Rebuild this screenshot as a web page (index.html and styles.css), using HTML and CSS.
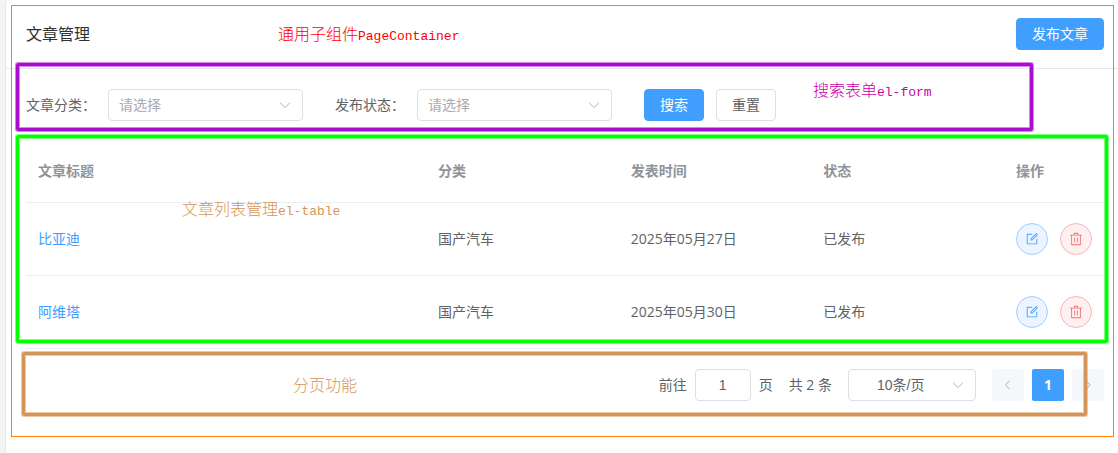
FILE: index.html
```html
<!DOCTYPE html>
<html lang="zh-CN">
<head>
    <meta charset="UTF-8">
    <meta name="viewport" content="width=device-width, initial-scale=1.0">
    <title>文章管理</title>
    <link rel="stylesheet" href="styles.css">
</head>
<body>
    <!-- shared icons -->
    <svg class="sprite" aria-hidden="true">
        <symbol id="arrow-down" viewBox="0 0 1024 1024">
            <path d="M831.872 340.864 512 652.672 192.128 340.864a30.592 30.592 0 0 0-42.752 0 29.12 29.12 0 0 0 0 41.6L489.664 714.24a32 32 0 0 0 44.672 0l340.288-331.712a29.12 29.12 0 0 0 0-41.728 30.592 30.592 0 0 0-42.752 0z"/>
        </symbol>
        <symbol id="arrow-left" viewBox="0 0 1024 1024">
            <path d="M609.408 149.376 277.76 489.6a32 32 0 0 0 0 44.672l331.648 340.352a29.12 29.12 0 0 0 41.728 0 30.592 30.592 0 0 0 0-42.752L339.264 511.936l311.872-319.872a30.592 30.592 0 0 0 0-42.688 29.12 29.12 0 0 0-41.728 0z"/>
        </symbol>
        <symbol id="arrow-right" viewBox="0 0 1024 1024">
            <path d="M340.864 149.312a30.592 30.592 0 0 0 0 42.752L652.736 512 340.864 831.872a30.592 30.592 0 0 0 0 42.752 29.12 29.12 0 0 0 41.728 0L714.24 534.336a32 32 0 0 0 0-44.672L382.592 149.376a29.12 29.12 0 0 0-41.728 0z"/>
        </symbol>
        <symbol id="edit" viewBox="0 0 1024 1024">
            <path d="M832 512a32 32 0 1 1 64 0v352a32 32 0 0 1-32 32H160a32 32 0 0 1-32-32V160a32 32 0 0 1 32-32h352a32 32 0 0 1 0 64H192v640h640z"/>
            <path d="m469.952 554.24 52.8-7.552L847.104 222.4a32 32 0 1 0-45.248-45.248L477.44 501.44l-7.552 52.8zm422.4-422.4a96 96 0 0 1 0 135.808l-331.84 331.84a32 32 0 0 1-18.112 9.088L436.8 623.68a32 32 0 0 1-36.224-36.224l15.104-105.6a32 32 0 0 1 9.024-18.112l331.904-331.84a96 96 0 0 1 135.744 0z"/>
        </symbol>
        <symbol id="delete" viewBox="0 0 1024 1024">
            <path d="M160 256H96a32 32 0 0 1 0-64h256V95.936a32 32 0 0 1 32-32h256a32 32 0 0 1 32 32V192h256a32 32 0 1 1 0 64h-64v672a32 32 0 0 1-32 32H192a32 32 0 0 1-32-32zm448-64v-64H416v64zM224 896h576V256H224zm192-128a32 32 0 0 1-32-32V416a32 32 0 0 1 64 0v320a32 32 0 0 1-32 32m192 0a32 32 0 0 1-32-32V416a32 32 0 0 1 64 0v320a32 32 0 0 1-32 32"/>
        </symbol>
    </svg>

    <main class="card">
        <div class="page-container">
            <header class="card-header">
                <h1>文章管理</h1>
                <button class="btn btn-primary" type="button">发布文章</button>
            </header>

            <div class="card-body">
                <form class="search-form">
                    <div class="form-item">
                        <label for="category">文章分类：</label>
                        <div class="select-box">
                            <select id="category" class="placeholder">
                                <option>请选择</option>
                            </select>
                            <svg class="icon"><use href="#arrow-down"/></svg>
                        </div>
                    </div>
                    <div class="form-item">
                        <label for="state">发布状态：</label>
                        <div class="select-box">
                            <select id="state" class="placeholder">
                                <option>请选择</option>
                            </select>
                            <svg class="icon"><use href="#arrow-down"/></svg>
                        </div>
                    </div>
                    <div class="form-buttons">
                        <button class="btn btn-primary" type="button">搜索</button>
                        <button class="btn" type="reset">重置</button>
                    </div>
                    <div class="mark mark-form"></div>
                    <span class="note note-form">搜索表单<span class="latin">el-form</span></span>
                </form>

                <div class="table-wrap">
                    <table>
                        <colgroup>
                            <col class="col-title">
                            <col>
                            <col>
                            <col>
                            <col class="col-action">
                        </colgroup>
                        <thead>
                            <tr>
                                <th>文章标题</th>
                                <th>分类</th>
                                <th>发表时间</th>
                                <th>状态</th>
                                <th>操作</th>
                            </tr>
                        </thead>
                        <tbody>
                            <tr>
                                <td><a href="#">比亚迪</a></td>
                                <td>国产汽车</td>
                                <td>2025年05月27日</td>
                                <td>已发布</td>
                                <td>
                                    <div class="actions">
                                        <button class="circle edit" type="button" aria-label="编辑"><svg class="icon"><use href="#edit"/></svg></button>
                                        <button class="circle delete" type="button" aria-label="删除"><svg class="icon"><use href="#delete"/></svg></button>
                                    </div>
                                </td>
                            </tr>
                            <tr>
                                <td><a href="#">阿维塔</a></td>
                                <td>国产汽车</td>
                                <td>2025年05月30日</td>
                                <td>已发布</td>
                                <td>
                                    <div class="actions">
                                        <button class="circle edit" type="button" aria-label="编辑"><svg class="icon"><use href="#edit"/></svg></button>
                                        <button class="circle delete" type="button" aria-label="删除"><svg class="icon"><use href="#delete"/></svg></button>
                                    </div>
                                </td>
                            </tr>
                        </tbody>
                    </table>
                    <div class="mark mark-table"></div>
                    <span class="note note-table">文章列表管理<span class="latin">el-table</span></span>
                </div>

                <nav class="pagination">
                    <div class="jumper">
                        <label for="page">前往</label>
                        <input id="page" type="text" value="1">
                        <span>页</span>
                    </div>
                    <span>共 2 条</span>
                    <div class="select-box page-size">
                        <select aria-label="每页条数">
                            <option>10条/页</option>
                        </select>
                        <svg class="icon"><use href="#arrow-down"/></svg>
                    </div>
                    <div class="pager">
                        <button type="button" disabled aria-label="上一页"><svg class="icon"><use href="#arrow-left"/></svg></button>
                        <button class="current" type="button">1</button>
                        <button type="button" disabled aria-label="下一页"><svg class="icon"><use href="#arrow-right"/></svg></button>
                    </div>
                    <div class="mark mark-page"></div>
                    <span class="note note-page">分页功能</span>
                </nav>
            </div>

            <div class="outline"></div>
            <span class="note note-container">通用子组件<span class="latin">PageContainer</span></span>
        </div>
    </main>
</body>
</html>
```

FILE: styles.css
```css
* {
    margin: 0;
    padding: 0;
    box-sizing: border-box;
}

body {
    min-height: 100vh;
    padding-left: 5px;
    background: #f4f4f4;
    color: #606266;
    font-family: "Open Sans", "Noto Sans CJK SC", sans-serif;
    font-size: 14px;
    line-height: 24px;
}

button, input, select {
    font: inherit;
    color: inherit;
}

a {
    color: #409eff;
    text-decoration: none;
}

.sprite {
    display: none;
}

.icon {
    display: block;
    width: 14px;
    height: 14px;
    fill: currentColor;
}

.card {
    min-height: 100vh;
    background: #fff;
    border-left: 1px solid #e4e7ed;
    border-radius: 4px 0 0 0;
}

.page-container {
    position: relative;
}

.card-header {
    display: flex;
    justify-content: space-between;
    align-items: center;
    padding: 18px 14px 18px 20px;
    border-bottom: 1px solid #e4e7ed;
}

.card-header h1 {
    color: #303133;
    font-size: 16px;
    font-weight: 400;
}

.card-body {
    padding: 20px 14px 20px 20px;
}

/* buttons */
.btn {
    height: 32px;
    padding: 0 15px;
    background: #fff;
    border: 1px solid #dcdfe6;
    border-radius: 4px;
    line-height: 30px;
    cursor: pointer;
}

.btn-primary {
    background: #409eff;
    border-color: #409eff;
    color: #fff;
}

/* search form */
.search-form {
    position: relative;
    display: flex;
    gap: 32px;
    margin-bottom: 18px;
}

.form-item {
    display: flex;
    align-items: center;
}

.form-item label {
    width: 82px;
    white-space: nowrap;
}

.form-buttons {
    display: flex;
    gap: 12px;
}

.select-box {
    position: relative;
    width: 195px;
}

.select-box select {
    display: block;
    width: 100%;
    height: 32px;
    padding: 0 32px 0 10px;
    appearance: none;
    background: #fff;
    border: 1px solid #dcdfe6;
    border-radius: 4px;
}

.select-box .placeholder {
    color: #a8abb2;
}

.select-box .icon {
    position: absolute;
    top: 9px;
    right: 11px;
    color: #b4b8c0;
    pointer-events: none;
}

/* table */
.table-wrap {
    position: relative;
}

table {
    width: 100%;
    table-layout: fixed;
    border-collapse: separate;
    border-spacing: 0;
}

.col-title {
    width: 400px;
}

.col-action {
    width: 100px;
}

th, td {
    padding: 20px 12px;
    border-bottom: 1px solid #ebeef5;
    text-align: left;
}

th {
    color: #909399;
    font-weight: 700;
    line-height: 23px;
}

.actions {
    display: flex;
    gap: 12px;
}

.circle {
    display: flex;
    flex: none;
    justify-content: center;
    align-items: center;
    width: 32px;
    height: 32px;
    border: 1px solid;
    border-radius: 50%;
    cursor: pointer;
}

.edit {
    background: #ecf5ff;
    border-color: #a0cfff;
    color: #409eff;
}

.delete {
    background: #fef0f0;
    border-color: #fab6b6;
    color: #f56c6c;
}

/* pagination */
.pagination {
    position: relative;
    display: flex;
    justify-content: flex-end;
    align-items: center;
    gap: 16px;
    margin-top: 20px;
}

.jumper, .pager {
    display: flex;
    align-items: center;
    gap: 8px;
}

.jumper input {
    width: 56px;
    height: 32px;
    border: 1px solid #dcdfe6;
    border-radius: 4px;
    text-align: center;
}

.page-size {
    width: 128px;
}

.jumper input, .page-size select {
    font-family: "Liberation Sans", "Noto Sans CJK SC", sans-serif;
}

.page-size select {
    padding: 0 28px;
}

.pager button {
    display: flex;
    justify-content: center;
    align-items: center;
    width: 32px;
    height: 32px;
    background: #f5f7fa;
    border: none;
    border-radius: 2px;
    color: #a8abb2;
}

.pager .icon {
    width: 12px;
    height: 12px;
}

.pager .current {
    background: #409eff;
    color: #fff;
    font-weight: 700;
}

/* annotations drawn over the page */
.outline, .mark, .note {
    position: absolute;
    pointer-events: none;
}

.outline {
    inset: 5px 4px -16px 5px;
    border: 1px solid #ff8000;
}

.mark {
    border: 3px solid var(--line);
    border-radius: 2px;
    box-shadow: 0 0 0 1px var(--edge), inset 0 0 0 1px var(--edge);
}

.mark-form {
    --line: #a80dd0;
    --edge: #a80dd080;
    inset: -26px 71px -10px -10px;
}

.mark-table {
    --line: #00ff00;
    --edge: #00ff0080;
    inset: -4px -4px 6px -10px;
}

.mark-page {
    --line: #d59556;
    --edge: #d5955680;
    inset: -17px 17px -15px -4px;
}

.note {
    font-size: 16px;
    font-weight: 300;
    white-space: nowrap;
}

.latin {
    font-family: "Liberation Mono", monospace;
    font-size: 13px;
}

.note-container {
    top: 22px;
    left: 272px;
    color: #ff0000;
}

.note-form {
    top: -11px;
    left: 787px;
    color: #cc00aa;
}

.note-table {
    top: 58px;
    left: 156px;
    color: #d59556;
}

.note-page {
    top: 4px;
    left: 267px;
    color: #d59556;
}
```
